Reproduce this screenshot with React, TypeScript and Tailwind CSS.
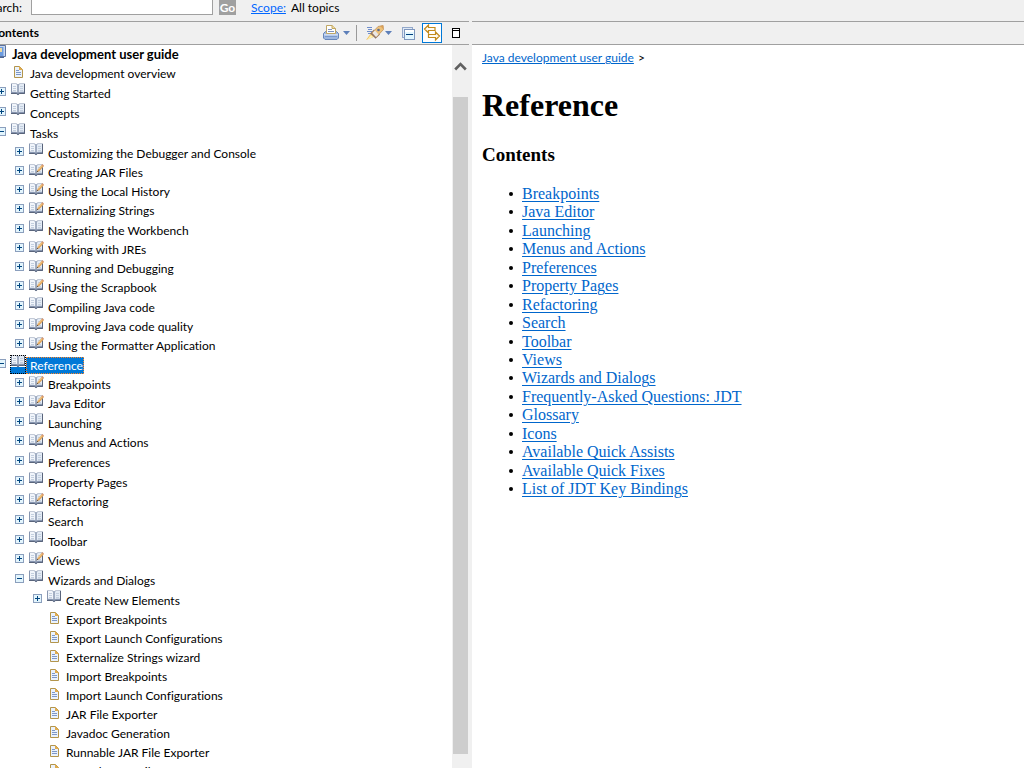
import React from "react";

type Kind = "book" | "edit" | "doc";

interface Topic {
  label: string;
  kind: Kind;
  selected?: boolean;
  children?: Topic[];
}

const t = (label: string, kind: Kind, children?: Topic[], selected?: boolean): Topic => ({
  label,
  kind,
  children,
  selected,
});

const topics: Topic[] = [
  t("Java development overview", "doc"),
  t("Getting Started", "book"),
  t("Concepts", "book"),
  t("Tasks", "book", [
    t("Customizing the Debugger and Console", "book"),
    t("Creating JAR Files", "edit"),
    t("Using the Local History", "edit"),
    t("Externalizing Strings", "edit"),
    t("Navigating the Workbench", "book"),
    t("Working with JREs", "edit"),
    t("Running and Debugging", "edit"),
    t("Using the Scrapbook", "edit"),
    t("Compiling Java code", "book"),
    t("Improving Java code quality", "edit"),
    t("Using the Formatter Application", "edit"),
  ]),
  t(
    "Reference",
    "book",
    [
      t("Breakpoints", "edit"),
      t("Java Editor", "edit"),
      t("Launching", "book"),
      t("Menus and Actions", "edit"),
      t("Preferences", "book"),
      t("Property Pages", "book"),
      t("Refactoring", "edit"),
      t("Search", "book"),
      t("Toolbar", "book"),
      t("Views", "edit"),
      t("Wizards and Dialogs", "book", [
        t("Create New Elements", "book"),
        t("Export Breakpoints", "doc"),
        t("Export Launch Configurations", "doc"),
        t("Externalize Strings wizard", "doc"),
        t("Import Breakpoints", "doc"),
        t("Import Launch Configurations", "doc"),
        t("JAR File Exporter", "doc"),
        t("Javadoc Generation", "doc"),
        t("Runnable JAR File Exporter", "doc"),
        t("Java Element Filters", "doc"),
      ]),
    ],
    true,
  ),
];

const referenceLinks = [
  "Breakpoints",
  "Java Editor",
  "Launching",
  "Menus and Actions",
  "Preferences",
  "Property Pages",
  "Refactoring",
  "Search",
  "Toolbar",
  "Views",
  "Wizards and Dialogs",
  "Frequently-Asked Questions: JDT",
  "Glossary",
  "Icons",
  "Available Quick Assists",
  "Available Quick Fixes",
  "List of JDT Key Bindings",
];

function ToggleIcon({ open }: { open: boolean }) {
  return (
    <svg width="9" height="9" viewBox="0 0 9 9" shapeRendering="crispEdges" aria-hidden="true">
      <rect x="0.5" y="0.5" width="8" height="8" fill="#e3f5fd" stroke="#8b9fbd" />
      <path d="M2 4.5h5" stroke="#00457f" />
      {!open && <path d="M4.5 2v5" stroke="#00457f" />}
    </svg>
  );
}

function BookIcon({ pencil = false }: { pencil?: boolean }) {
  return (
    <svg width="16" height="13" viewBox="0 0 16 13" aria-hidden="true">
      <path d="M1 .5h5.500l1.500 1 1.500-1H15v10.500H9.500L8 12.300 6.500 11H1z" fill="#8796b0" />
      <path d="M2 1h4l1.500 1v7.500L6 8.700H2z" fill="#f1f5fb" />
      <path d="M10 1h4v7.700h-4L8.500 9.500V2z" fill="#e3ebf5" />
      <path d="M3 3.500h3M3 5.500h3M10 3.500h3M10 5.500h3M10 7.500h3M3 7.500h3" stroke="#c3cfdf" />
      <path d="M8 2v8" stroke="#8b98b0" />
      <path d="M1 10.500h5.500l1.500 1 1.500-1H14.500V1" stroke="#59647b" fill="none" />
      {pencil && (
        <>
          <path d="M8.500 8.500 10 5.200 14 .6 15.800 2.200 11.600 7z" fill="#e2a75c" />
          <path d="M13.500 1.200 14.600 .3 15.900 1.500 15 2.600z" fill="#d08b6a" />
          <path d="M10.500 5.500 14 1.500" stroke="#f6d59c" strokeWidth=".8" />
          <path d="M8.500 8.500 9.300 6.700 10.300 7.600z" fill="#4b4036" />
        </>
      )}
    </svg>
  );
}

function DocIcon() {
  return (
    <svg width="16" height="12" viewBox="0 0 16 12" aria-hidden="true">
      <path d="M4.500 .5h5l3 3v8h-8z" fill="#eaf2fc" stroke="#b3954c" />
      <path d="M9 0 13 4H9z" fill="#e0ab4e" />
      <path d="M6 4.500h3M6 6.500h5M6 8.500h5" stroke="#7d97c8" />
    </svg>
  );
}

function Caret() {
  return (
    <svg width="7" height="4" viewBox="0 0 7 4" aria-hidden="true">
      <path d="M0 0h7L3.500 4z" fill="#5d7fb9" />
    </svg>
  );
}

function TopicRow({ topic }: { topic: Topic }) {
  const open = !!topic.children;
  const isBook = topic.kind === "book";
  return (
    <li>
      <div className={isBook ? "flex h-5 items-start" : "flex h-[19px] items-start"}>
        {topic.kind === "doc" ? (
          <span className="w-[9px]" />
        ) : (
          <button
            type="button"
            aria-label={(open ? "Collapse " : "Expand ") + topic.label}
            className={isBook ? "mt-1 block" : "mt-[3px] block"}
          >
            <ToggleIcon open={open} />
          </button>
        )}
        <a
          href="#"
          className={
            topic.selected
              ? "ml-1 flex h-[19px] items-end whitespace-nowrap text-white"
              : "ml-1 flex h-full items-start gap-1 whitespace-nowrap"
          }
        >
          {topic.selected ? (
            <>
              <span className="flex h-full w-4 items-start bg-linear-to-b from-white from-65% to-[#0078d7] to-65% outline-1 -outline-offset-1 outline-dotted outline-black">
                <BookIcon />
              </span>
              <span className="h-[17px] bg-[#0078d7] pr-px pl-1 leading-[17px] outline-1 -outline-offset-1 outline-dotted outline-[#ff8728]">
                {topic.label}
              </span>
            </>
          ) : (
            <>
              <span className={topic.kind === "doc" ? "block pt-0.5" : isBook ? "block" : "block pt-px"}>
                {topic.kind === "doc" ? <DocIcon /> : <BookIcon pencil={topic.kind === "edit"} />}
              </span>
              <span className="self-end leading-[19px]">{topic.label}</span>
            </>
          )}
        </a>
      </div>
      {topic.children && <TopicList items={topic.children} nested />}
    </li>
  );
}

function TopicList({ items, nested = false }: { items: Topic[]; nested?: boolean }) {
  return (
    <ul className={nested ? "pl-[18px]" : "-ml-[3px]"}>
      {items.map((item) => (
        <TopicRow key={item.label} topic={item} />
      ))}
    </ul>
  );
}

function Toolbar() {
  return (
    <div className="flex items-center">
      <button type="button" aria-label="Print" className="flex items-center gap-1">
        <svg width="16" height="16" viewBox="0 0 16 16" aria-hidden="true">
          <path d="M2.500 6.500h11l2 2V13l-1.500 1.500H2L.5 13V8.500z" fill="#9db7e0" stroke="#6685b8" />
          <path d="M1 9h14v1.500H1z" fill="#cfdcf2" />
          <path d="M2 11.500h12" stroke="#7c99cb" />
          <path d="M3.500 8.500v-8H9l3.500 3v5z" fill="#fff" stroke="#c0a765" />
          <path d="M9 .5v3h3.500" fill="#f2dc9c" stroke="#c0a765" />
          <path d="M5 4.500h4M5 6.500h6" stroke="#7f93bd" />
        </svg>
        <Caret />
      </button>
      <span className="mx-1.5 h-4 w-px bg-[#9a9a9a]" />
      <button type="button" aria-label="Search selected topic" className="ml-[3px] flex items-center gap-px">
        <svg width="18" height="16" viewBox="0 0 18 16" aria-hidden="true">
          <path d="M1 2.500h5M2 4.500h4M1 6.500h5M2 8.500h3" stroke="#6f8ecb" />
          <path d="M0 15 5 8l4 3.500z" fill="#f3c869" />
          <path d="M1 15 5 10l2 2z" fill="#fdf0b4" />
          <path d="M4 8.500 8 4.500l6 5-4.500 4.200L7 11z" fill="#8d7569" />
          <path d="M6 8 12 1.500 17 .5l.5 4L10.500 12z" fill="#edc179" stroke="#b98a55" strokeWidth=".7" />
          <path d="M6.500 8 9 5.500l3.500 4-2.500 2.500z" fill="#e9e7e8" />
          <circle cx="12.500" cy="5" r="1.300" fill="#5c6c90" />
          <path d="M14 1 17.400.6 17.300 4z" fill="#d9a05a" />
        </svg>
        <Caret />
      </button>
      <button type="button" aria-label="Collapse all" className="ml-2.5">
        <svg width="13" height="13" viewBox="0 0 13 13" shapeRendering="crispEdges" aria-hidden="true">
          <rect x=".5" y=".5" width="10" height="10" fill="#dfe9f5" stroke="#93a8ca" />
          <rect x="2.500" y="2.500" width="10" height="10" fill="#e2f6fe" stroke="#7e96bd" />
          <rect x="3" y="3" width="9" height="2" fill="#fff" />
          <path d="M4 7.500h7" stroke="#003f7d" />
        </svg>
      </button>
      <button
        type="button"
        aria-label="Link with contents"
        className="ml-[7px] flex h-5 w-5 items-center justify-center border border-[#0078d7] bg-white"
      >
        <svg width="18" height="18" viewBox="0 0 18 18" aria-hidden="true">
          <g fill="#fffaf0" stroke="#c28a1c" strokeWidth="1.200">
            <path d="M1.500 5 5.500 1v2.500H12v3H5.500V9z" />
            <path d="M16.500 12 12.500 8v2.500H5.500v3h7V16z" />
          </g>
        </svg>
      </button>
      <button type="button" aria-label="Maximize" className="ml-2.5">
        <svg width="8" height="10" viewBox="0 0 8 10" shapeRendering="crispEdges" aria-hidden="true">
          <rect x=".5" y=".5" width="7" height="9" fill="#fff" stroke="#000" />
          <path d="M0 2.500h8" stroke="#000" />
        </svg>
      </button>
    </div>
  );
}

export default function App() {
  return (
    <div className="flex h-screen flex-col overflow-hidden bg-[#f0f0f0] font-['Lato','Open_Sans',sans-serif] text-[12px] text-black [font-variant-ligatures:none]">
      <form className="flex h-[21px] items-start leading-[15px]">
        <label htmlFor="search" className="flex w-[22px] justify-end overflow-hidden">
          Search:
        </label>
        <input
          id="search"
          type="text"
          className="ml-[9px] h-[15px] w-[182px] border border-t-0 border-[#a0a0a0] bg-white px-1 outline-none"
        />
        <button
          type="button"
          className="ml-1.5 flex h-[15px] w-[17px] justify-center bg-[#a0a0a0] font-bold text-white"
        >
          Go
        </button>
        <a href="#" className="ml-[15px] text-[#0066ff] underline">
          Scope:
        </a>
        <span className="ml-[5px]">All topics</span>
      </form>

      <div className="flex min-h-0 flex-1">
        <aside className="flex w-[469px] shrink-0 flex-col border-t border-[#a0a0a0]">
          <header className="flex h-[23px] shrink-0 items-center justify-between border-b border-[#a0a0a0] pr-[9px]">
            <h2 className="flex w-[39px] justify-end overflow-hidden font-bold">Contents</h2>
            <Toolbar />
          </header>
          <div className="flex min-h-0 flex-1">
            <nav aria-label="Contents" className="min-w-0 flex-1 overflow-hidden bg-white">
              <a href="#" className="flex h-[19px] items-start gap-1.5 text-[13px] font-bold leading-[19px]">
                <svg width="6" height="14" viewBox="0 0 6 14" aria-hidden="true">
                  <path d="M0 .5h5.500v11H0" fill="#c9daf2" stroke="#5c739e" />
                  <path d="M0 2h3.500v9H0z" fill="#6b9be0" />
                  <path d="M0 3h2v4H0z" fill="#ecd9a0" />
                  <path d="M0 12.500h4" stroke="#4c6594" />
                </svg>
                Java development user guide
              </a>
              <TopicList items={topics} />
            </nav>
            <div className="flex w-[17px] shrink-0 flex-col items-center pb-3.5">
              <svg width="13" height="10" viewBox="0 0 13 10" className="mt-4 shrink-0" aria-hidden="true">
                <path d="M1.200 8.500 6.500 3l5.300 5.500" fill="none" stroke="#606060" strokeWidth="2.600" />
              </svg>
              <div className="mt-[26px] w-[15px] flex-1 bg-[#cdcdcd]" />
            </div>
          </div>
        </aside>

        <main className="ml-[3px] flex min-w-0 flex-1 flex-col border-t border-[#a0a0a0]">
          <div className="h-[23px] shrink-0 border-b border-[#a0a0a0]" />
          <div className="flex-1 overflow-hidden bg-white px-2.5 pt-1">
            <p className="leading-[18px]">
              <a href="#" className="text-[#0066cc] underline">
                Java development user guide
              </a>
              <span className="ml-1">&gt;</span>
            </p>
            <div className="font-['Liberation_Serif',serif]">
              <h1 className="mt-5 text-[32px] font-bold leading-9">Reference</h1>
              <h2 className="mt-5 text-[19px] font-bold leading-6">Contents</h2>
              <ul className="mt-[18px] flex h-[313px] flex-col justify-between pl-[27px] text-[16px] leading-[18px]">
                {referenceLinks.map((label) => (
                  <li key={label} className="flex items-center gap-[9px]">
                    <span className="h-1 w-1 rounded-full bg-black" />
                    <a href="#" className="text-[#0066cc] underline underline-offset-2">
                      {label}
                    </a>
                  </li>
                ))}
              </ul>
            </div>
          </div>
        </main>
      </div>
    </div>
  );
}
